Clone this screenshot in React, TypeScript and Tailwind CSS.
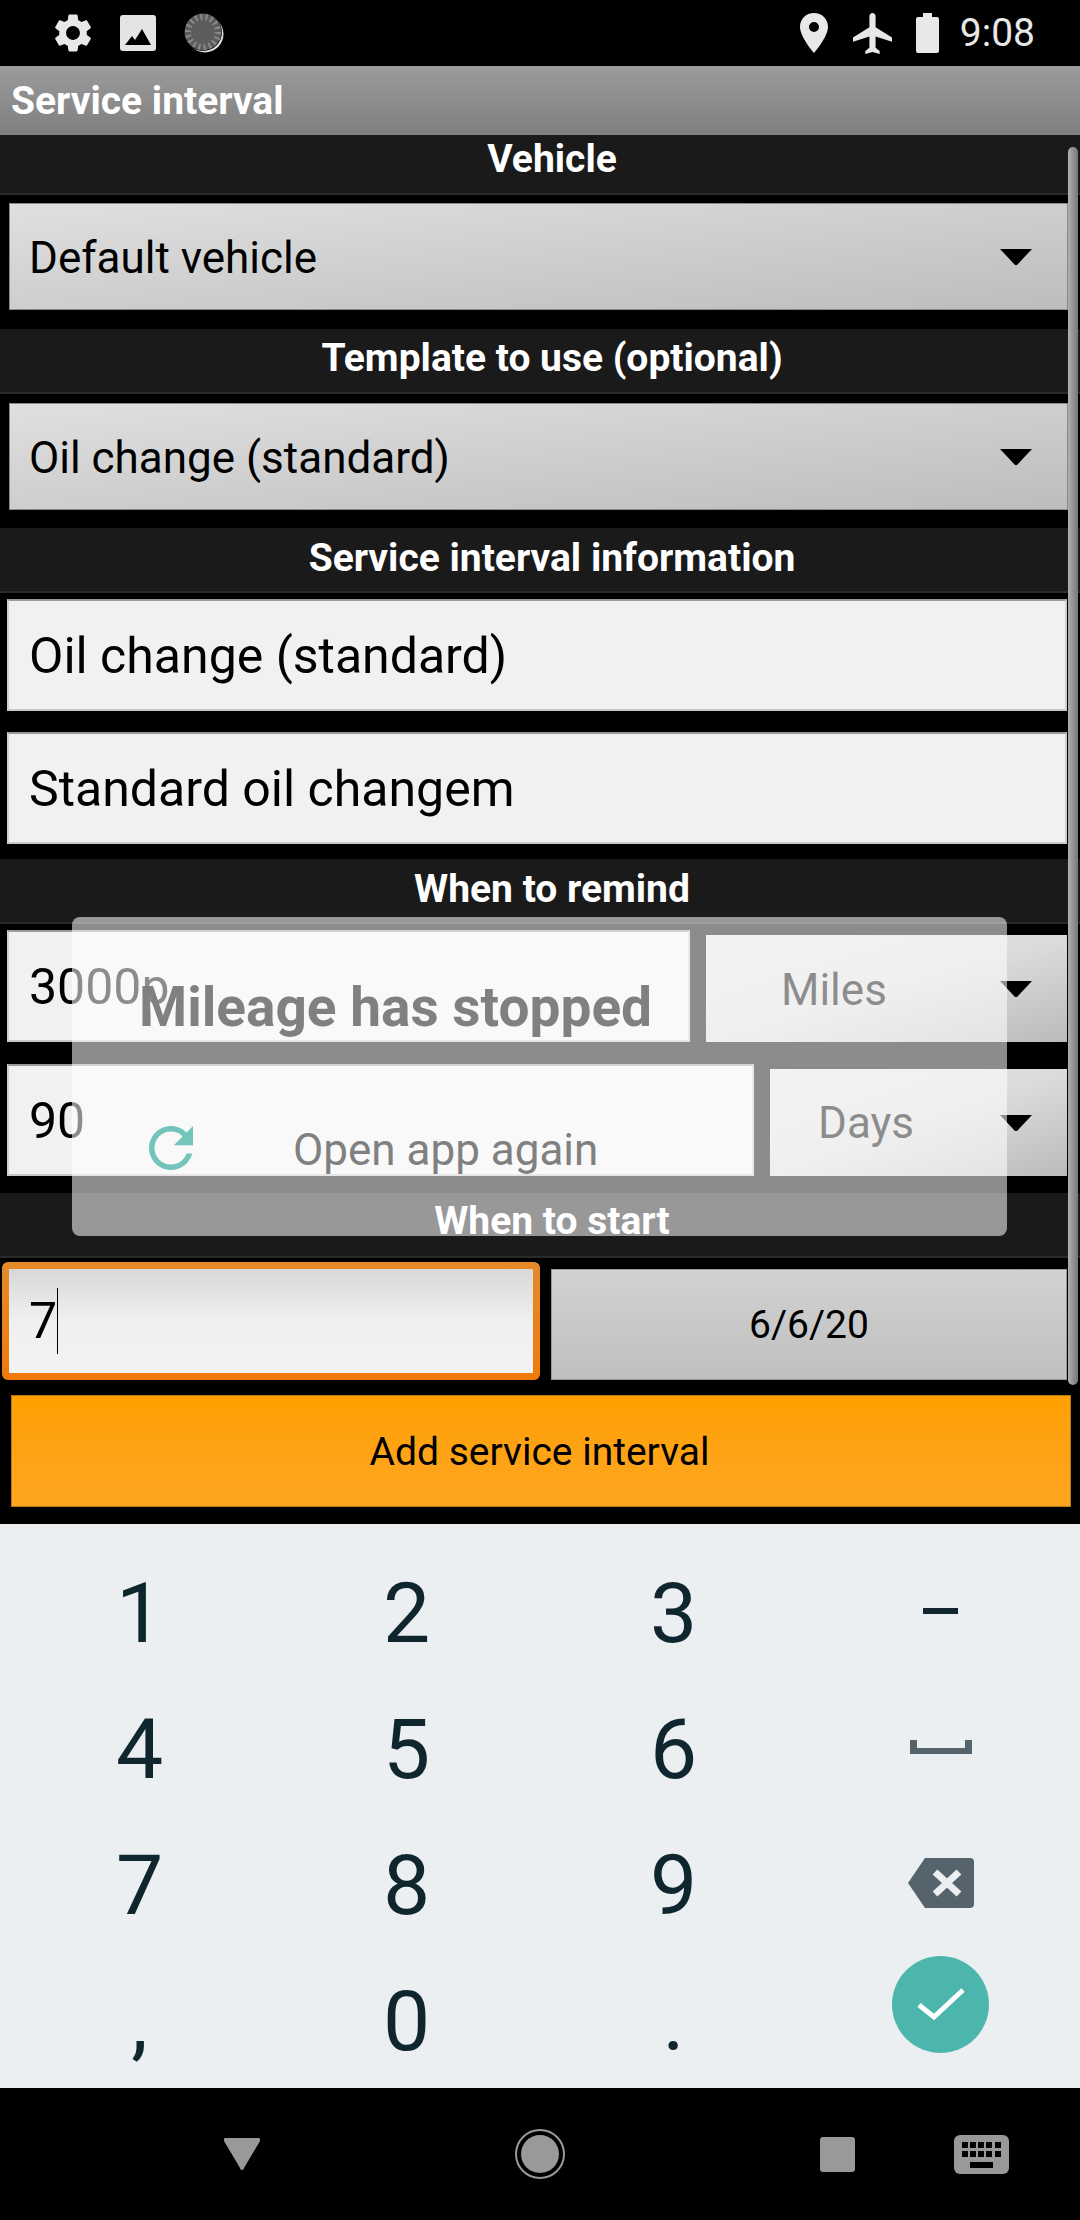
const FONT = "font-['Roboto',sans-serif]";

const KEYS = ["1", "2", "3", "-", "4", "5", "6", "space", "7", "8", "9", "del", ",", "0", ".", "done"];

function SectionHeader({ label, className }: { label: string; className: string }) {
    return (
        <div className={`flex justify-center border-b-2 border-[#2a2a2a] bg-[#1a1a1a] pl-[24px] text-[39px] leading-[44px] font-bold text-white ${className}`}>
            {label}
        </div>
    );
}

function Arrow() {
    return (
        <svg viewBox="0 0 34 18" className="h-[18px] w-[34px] shrink-0">
            <path d="M1 1h32L18 17h-2z" fill="#000" />
        </svg>
    );
}

function Spinner({ label, className }: { label: string; className: string }) {
    return (
        <div className={`flex h-[107px] items-center border border-[#888] bg-gradient-to-br from-[#e0e0e0] to-[#bdbdbd] text-[44px] text-black ${className}`}>
            <span className="pl-[19px] pt-[2px]">{label}</span>
            <span className="ml-auto mr-[34px]">
                <Arrow />
            </span>
        </div>
    );
}

function UnitSpinner({ label, className, textClass }: { label: string; className: string; textClass: string }) {
    return (
        <div className={`flex h-[107px] items-center bg-gradient-to-br from-[#e4e4e4] via-[#dcdcdc] to-[#bbbbbb] text-[44px] text-black ${className}`}>
            <span className={textClass}>{label}</span>
            <span className="ml-auto mr-[34px]">
                <Arrow />
            </span>
        </div>
    );
}

function Field({ value, className }: { value: string; className: string }) {
    return (
        <div className={`flex h-[112px] items-center border-2 border-t-[#9a9a9a] border-r-[#d0d0d0] border-b-[#c8c8c8] border-l-[#d0d0d0] bg-[#f1f1f1] pl-[20px] pt-[2px] text-[50px] text-black ${className}`}>
            {value}
        </div>
    );
}

function KeyCell({ k }: { k: string }) {
    if (k === "-") {
        return <div className="h-[6px] w-[35px] bg-[#10262f]" />;
    }
    if (k === "space") {
        return (
            <svg viewBox="0 0 62 14" className="h-[14px] w-[62px]">
                <path d="M0 0h7v8h48V0h7v14H0z" fill="#54636c" />
            </svg>
        );
    }
    if (k === "del") {
        return (
            <svg viewBox="0 0 66 50" className="h-[50px] w-[66px]">
                <path d="M17 0h45a4 4 0 0 1 4 4v42a4 4 0 0 1-4 4H17L0 25z" fill="#54636c" />
                <path d="M27 14l24 22M51 14L27 36" stroke="#eceff2" strokeWidth="7" fill="none" />
            </svg>
        );
    }
    if (k === "done") {
        return (
            <div className="mt-[-30px] flex h-[97px] w-[97px] items-center justify-center rounded-full bg-[#4db6ac]">
                <svg viewBox="0 0 50 38" className="h-[38px] w-[50px]">
                    <path d="M3 20l15 12L47 5" stroke="#fff" strokeWidth="5" fill="none" />
                </svg>
            </div>
        );
    }
    return <span className="pt-[5px] text-[84px] leading-none font-normal text-[#10262f]">{k}</span>;
}

export default function App() {
    return (
        <div className={`relative flex h-[2220px] w-[1080px] flex-col overflow-hidden bg-black ${FONT}`}>
            {/* status bar */}
            <div className="flex h-[66px] items-center pl-[50px] pr-[45px] text-[#e8e8e8]">
                <svg viewBox="0 0 24 24" className="h-[48px] w-[46px]" fill="currentColor">
                    <path d="M19.14 12.94c.04-.3.06-.61.06-.94 0-.32-.02-.64-.07-.94l2.03-1.58c.18-.14.23-.41.12-.61l-1.92-3.32c-.12-.22-.37-.29-.59-.22l-2.39.96c-.5-.38-1.03-.7-1.62-.94l-.36-2.54c-.04-.24-.24-.41-.48-.41h-3.84c-.24 0-.43.17-.47.41l-.36 2.54c-.59.24-1.13.57-1.62.94l-2.39-.96c-.22-.08-.47 0-.59.22L2.74 8.87c-.12.21-.08.47.12.61l2.03 1.58c-.05.3-.09.63-.09.94s.02.64.07.94l-2.03 1.58c-.18.14-.23.41-.12.61l1.92 3.32c.12.22.37.29.59.22l2.39-.96c.5.38 1.03.7 1.62.94l.36 2.54c.05.24.24.41.48.41h3.84c.24 0 .44-.17.47-.41l.36-2.54c.59-.24 1.13-.56 1.62-.94l2.39.96c.22.08.47 0 .59-.22l1.92-3.32c.12-.22.07-.47-.12-.61l-2.01-1.58zM12 15.6c-1.98 0-3.6-1.62-3.6-3.6s1.62-3.6 3.6-3.6 3.6 1.62 3.6 3.6-1.62 3.6-3.6 3.6z" />
                </svg>
                <svg viewBox="0 0 36 36" className="ml-[24px] h-[36px] w-[36px]">
                    <rect width="36" height="36" rx="3" fill="#e4e4e4" />
                    <path d="M5 30l7-9 3 4 7-11 9 16z" fill="#000" />
                </svg>
                <svg viewBox="0 0 40 40" className="ml-[28px] h-[40px] w-[40px]">
                    <circle cx="21" cy="21" r="18.5" fill="#ddd" />
                    <circle cx="19" cy="19" r="19" fill="#000" />
                    <circle cx="19" cy="19" r="18.5" fill="#5c5c5c" />
                    <circle cx="19" cy="19" r="15" fill="none" stroke="#8a8a8a" strokeWidth="6" strokeDasharray="2 3.2" />
                </svg>
                <svg viewBox="0 0 28 40" className="ml-auto h-[40px] w-[28px]" fill="currentColor">
                    <path fillRule="evenodd" d="M14 0C6 0 0 6 0 14c0 10 14 26 14 26s14-16 14-26C28 6 22 0 14 0zm0 19a5 5 0 1 1 0-10 5 5 0 0 1 0 10z" />
                </svg>
                <svg viewBox="2 2 19 20" className="ml-[25px] h-[41px] w-[39px]" fill="currentColor">
                    <path d="M21 16v-2l-8-5V3.5c0-.83-.67-1.5-1.5-1.5S10 2.67 10 3.5V9l-8 5v2l8-2.5V19l-2 1.5V22l3.5-1 3.5 1v-1.5L13 19v-5.5l8 2.5z" />
                </svg>
                <svg viewBox="0 0 23 40" className="ml-[24px] h-[40px] w-[23px]" fill="currentColor">
                    <path d="M7 0h9v4h5a2 2 0 0 1 2 2v32a2 2 0 0 1-2 2H2a2 2 0 0 1-2-2V6a2 2 0 0 1 2-2h5z" />
                </svg>
                <span className="ml-[21px] text-[39px] leading-none">9:08</span>
            </div>

            {/* title */}
            <div className="flex h-[69px] items-start bg-gradient-to-b from-[#9b9b9b] to-[#7f7f7f] pl-[11px] pt-[12px] text-[39px] leading-[46px] font-bold text-white">
                Service interval
            </div>

            {/* form */}
            <div className="flex h-[1389px] flex-col">
                <SectionHeader label="Vehicle" className="h-[60px] pt-[2px]" />
                <Spinner label="Default vehicle" className="ml-[9px] mr-[12px] mt-[8px]" />
                <SectionHeader label="Template to use (optional)" className="mt-[19px] h-[65px] pt-[7px]" />
                <Spinner label="Oil change (standard)" className="ml-[9px] mr-[12px] mt-[9px]" />
                <SectionHeader label="Service interval information" className="mt-[18px] h-[65px] pt-[8px]" />
                <Field value="Oil change (standard)" className="ml-[7px] mr-[13px] mt-[6px]" />
                <Field value="Standard oil changem" className="ml-[7px] mr-[13px] mt-[21px]" />
                <SectionHeader label="When to remind" className="mt-[15px] h-[65px] pt-[8px]" />
                <div className="mt-[6px] ml-[7px] mr-[13px] flex items-end gap-[16px]">
                    <Field value="3000p" className="w-[683px]" />
                    <UnitSpinner label="Miles" className="flex-1" textClass="pl-[75px] pt-[2px]" />
                </div>
                <div className="mt-[22px] ml-[7px] mr-[13px] flex items-end gap-[16px]">
                    <Field value="90" className="w-[747px]" />
                    <UnitSpinner label="Days" className="flex-1" textClass="pl-[48px]" />
                </div>
                <SectionHeader label="When to start" className="mt-[17px] h-[65px] pt-[6px]" />
                <div className="mt-[4px] ml-[2px] mr-[13px] flex items-end gap-[11px]">
                    <div className="flex h-[118px] w-[538px] items-center rounded-[6px] bg-gradient-to-b from-[#e48a28] to-[#f07a08] p-[7px]">
                        <div className="flex h-full w-full items-center bg-gradient-to-b from-[#d8d8d8] via-[#f0f0f0] to-[#f2f2f2] pl-[20px] text-[50px] text-black">
                            7<span className="h-[66px] w-[1px] bg-black" />
                        </div>
                    </div>
                    <div className="flex h-[111px] flex-1 items-center justify-center border border-[#999] bg-gradient-to-b from-[#d2d2d2] to-[#bfbfbf] pt-[2px] text-[39px] text-black">
                        6/6/20
                    </div>
                </div>
                <div className="mt-[15px] ml-[11px] mr-[9px] flex h-[112px] items-center justify-center border border-[#b87a10] bg-gradient-to-b from-[#ffa000] to-[#ffa520] pt-[3px] pr-[3px] text-[39px] text-black">
                    Add service interval
                </div>
            </div>

            {/* number pad */}
            <div className="grid h-[564px] grid-cols-[repeat(4,267px)] grid-rows-[repeat(4,136px)] bg-[#eceff2] px-[6px] pt-[19px]">
                {KEYS.map((k) => (
                    <div key={k} className="flex items-center justify-center">
                        <KeyCell k={k} />
                    </div>
                ))}
            </div>

            {/* nav bar */}
            <div className="flex h-[132px] items-center pl-[224px] text-[#999]">
                <svg viewBox="0 0 36 32" className="h-[32px] w-[36px]" fill="currentColor">
                    <path d="M2 0h32a2 2 0 0 1 2 3L20 30a2 2 0 0 1-4 0L0 3a2 2 0 0 1 2-3z" />
                </svg>
                <svg viewBox="0 0 50 50" className="ml-[255px] h-[50px] w-[50px]">
                    <circle cx="25" cy="25" r="24" fill="none" stroke="#999" strokeWidth="2" />
                    <circle cx="25" cy="25" r="19" fill="#999" />
                </svg>
                <div className="ml-[255px] h-[35px] w-[35px] rounded-[3px] bg-[#999]" />
                <svg viewBox="0 0 55 39" className="ml-[99px] h-[39px] w-[55px]">
                    <rect width="55" height="39" rx="6" fill="#999" />
                    <path d="M8 7h6v6H8zM16 7h6v6h-6zM24 7h6v6h-6zM32 7h6v6h-6zM41 7h6v6h-6zM8 16h6v6H8zM16 16h6v6h-6zM24 16h6v6h-6zM32 16h6v6h-6zM41 16h6v6h-6zM16 27h23v6H16z" fill="#000" />
                </svg>
            </div>

            {/* scrollbar */}
            <div className="absolute left-[1068px] top-[147px] h-[1238px] w-[10px] rounded-full bg-gradient-to-r from-[#b0b0b0] to-[#777]" />

            {/* toast */}
            <div className="absolute left-[72px] top-[917px] h-[319px] w-[935px] rounded-[8px] bg-white/55">
                <div className="absolute left-[67px] top-[55px] text-[55px] leading-[70px] font-bold whitespace-nowrap text-[#808080]">
                    Mileage has stopped
                </div>
                <svg viewBox="0 0 24 24" className="absolute left-[66px] top-[198px] h-[66px] w-[66px]" fill="#73c5bc">
                    <path d="M17.65 6.35C16.2 4.9 14.21 4 12 4c-4.42 0-7.99 3.58-7.99 8s3.57 8 7.99 8c3.73 0 6.84-2.55 7.73-6h-2.08c-.82 2.33-3.04 4-5.65 4-3.31 0-6-2.69-6-6s2.69-6 6-6c1.66 0 3.14.69 4.22 1.78L13 11h7V4l-2.35 2.35z" />
                </svg>
                <div className="absolute left-[221px] top-[206px] text-[44px] leading-[54px] whitespace-nowrap text-[#808080]">
                    Open app again
                </div>
            </div>
        </div>
    );
}
